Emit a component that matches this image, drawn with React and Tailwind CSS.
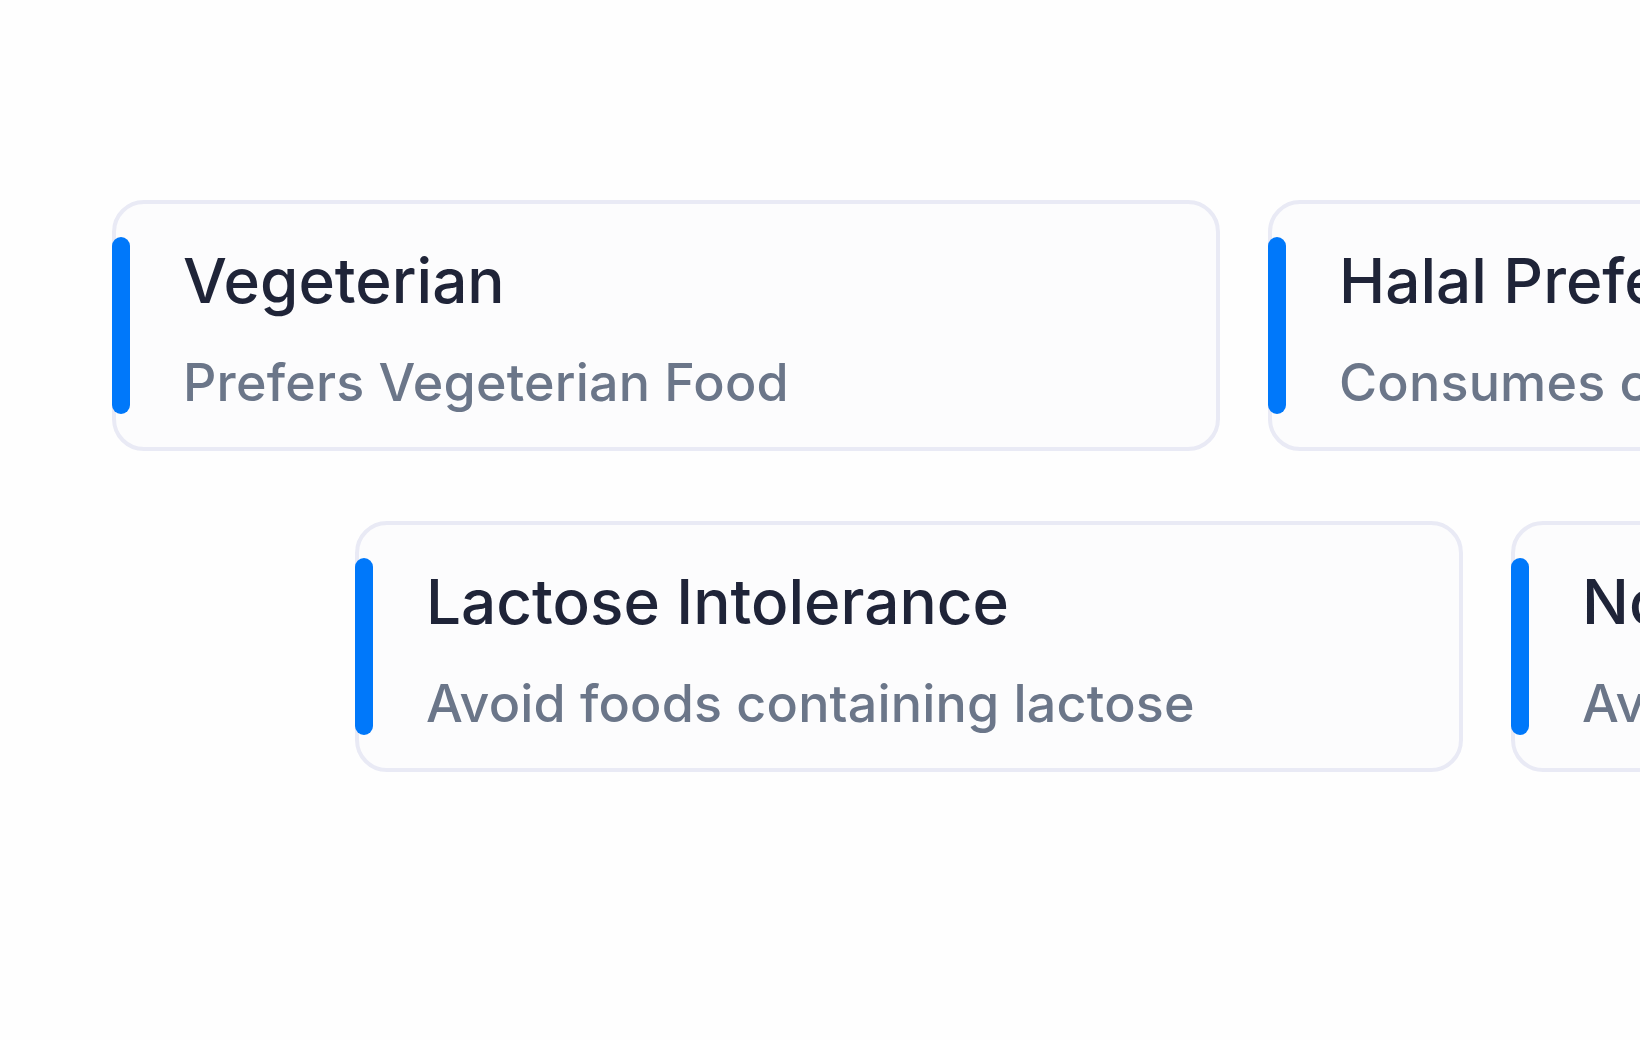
import React from "react";

const rows = [
  {
    offset: "pl-[112px]",
    cards: [
      { title: "Vegeterian", text: "Prefers Vegeterian Food" },
      { title: "Halal Preference", text: "Consumes only halal food" },
    ],
  },
  {
    offset: "pl-[355px]",
    cards: [
      { title: "Lactose Intolerance", text: "Avoid foods containing lactose" },
      { title: "No Beef", text: "Avoids beef and beef products" },
    ],
  },
];

function PreferenceCard({ title, text }) {
  return (
    <div className="relative w-[1108px] shrink-0 rounded-[32px] border-4 border-[#e9eaf5] bg-[#fcfcfd] pl-[67px] pt-[46px] pb-[38px]">
      {/* blue accent */}
      <div className="absolute left-[-4px] top-[33px] h-[177px] w-[18px] rounded-full bg-[#0078fa]" />
      <h3 className="text-[62px] leading-[62px] font-medium text-[#1f2438]">
        {title}
      </h3>
      <p className="mt-[45px] text-[52px] leading-[52px] font-medium tracking-[0.2px] text-[#6b7689]">
        {text}
      </p>
    </div>
  );
}

export default function App() {
  return (
    <div
      className="h-[1040px] w-[1640px] overflow-hidden bg-[#fefefe] pt-[200px]"
      style={{ fontFamily: "Inter, 'Noto Sans', sans-serif" }}
    >
      <div className="flex flex-col gap-[70px]">
        {rows.map((row, i) => (
          <div key={i} className={`flex gap-[48px] ${row.offset}`}>
            {row.cards.map((c) => (
              <PreferenceCard key={c.title} title={c.title} text={c.text} />
            ))}
          </div>
        ))}
      </div>
    </div>
  );
}
